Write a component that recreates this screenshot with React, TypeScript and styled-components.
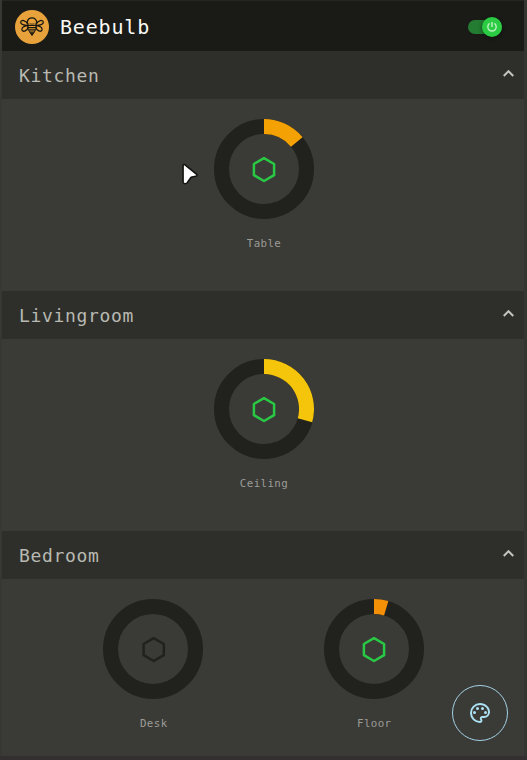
import React from "react";
import styled, { createGlobalStyle } from "styled-components";

const GlobalStyle = createGlobalStyle`
  * { box-sizing: border-box; }
  html, body { margin: 0; background: #332f30; }
  body { font-family: "DejaVu Sans Mono", monospace; overflow: hidden; }
  svg { display: block; flex: none; }
  h1, h2 { margin: 0; font-weight: 400; }
`;

const Page = styled.div`
  position: relative;
  width: 527px;
  height: 756px;
  display: flex;
  flex-direction: column;
  background: #3a3a36;
  border-left: 2px solid #373834;
  border-right: 3px solid #353632;
`;

const AppBar = styled.header`
  height: 51px;
  flex: none;
  display: flex;
  align-items: center;
  padding: 1px 22px 0 13px;
  background: #1a1b17;
  border-top: 1px solid #252622;
`;

const Title = styled.h1`
  flex: 1;
  margin-left: 11px;
  font-size: 20px;
  letter-spacing: 0.82px;
  line-height: 28px;
  color: #fafaf5;
`;

const Switch = styled.div`
  width: 34px;
  height: 14px;
  border-radius: 7px;
  background: #237c31;
  display: flex;
  align-items: center;
  justify-content: flex-end;
`;

const Thumb = styled.div`
  width: 20px;
  height: 20px;
  flex: none;
  border-radius: 50%;
  background: #2bcb43;
  box-shadow: 0 1px 4px rgba(0, 0, 0, 0.45);
  display: grid;
  place-items: center;
`;

const RoomHeader = styled.div`
  height: 48px;
  flex: none;
  display: flex;
  align-items: center;
  justify-content: space-between;
  padding: 0 5px 0 17px;
  background: #2e2f2a;
`;

const RoomName = styled.h2`
  padding-top: 2px;
  font-size: 18px;
  letter-spacing: 0.66px;
  line-height: 24px;
  color: #b8b9b2;
`;

const Lamps = styled.div<{ $height: number }>`
  height: ${(p) => p.$height}px;
  flex: none;
  display: flex;
  padding: 20px 40px 0 41px;
`;

const LampCell = styled.div`
  flex: 1;
  display: flex;
  flex-direction: column;
  align-items: center;
  gap: 16px;
`;

const LampLabel = styled.span`
  padding-left: 1px;
  font-size: 10.8px;
  letter-spacing: 0.4px;
  line-height: 17px;
  color: #9b9c96;
`;

const ColorButton = styled.button`
  position: absolute;
  right: 16px;
  bottom: 15px;
  width: 56px;
  height: 56px;
  padding: 0;
  border: 1px solid #a5d2e6;
  border-radius: 50%;
  background: transparent;
  display: grid;
  place-items: center;
`;

const Pointer = styled.svg`
  position: absolute;
  left: 178px;
  top: 161px;
`;

const BeeLogo = () => (
  <svg width="34" height="34" viewBox="0 0 34 34" fill="none" stroke="#18170f">
    <circle cx="17" cy="17" r="17" fill="#e8a23c" stroke="none" />
    <g strokeWidth="1.3" strokeLinejoin="round">
      <path d="M13.4 14.6C10.8 10 6 9.4 5.7 12.2c-.2 2.3 3.8 3.2 7.4 3.5C8.8 16 6.4 17.6 7 20c.8 2.7 5.5.8 6.3-3.4" />
      <path d="M20.6 14.6C23.2 10 28 9.4 28.3 12.2c.2 2.3-3.8 3.2-7.4 3.5 4.3.3 6.7 1.9 6.1 4.3-.8 2.7-5.5.8-6.3-3.4" />
      <path d="M12.9 14.4c-1-1.4-.6-4 .8-5.3 1.8-1.7 4.8-1.7 6.6 0 1.4 1.3 1.8 3.9.8 5.3" />
      <path d="M14.4 13.2c1.2 1.1 4 1.1 5.2 0" strokeWidth=".6" />
    </g>
    <path d="M13 15.3h8M13 17.6h8M13.5 19.9h7M14.6 22.1h4.8" strokeWidth="1.35" />
    <path d="M13 15c-.7 3 .8 6.4 4 10.2 3.2-3.8 4.7-7.2 4-10.2" strokeWidth="1" />
    <path d="M15.2 23h3.6L17 26.2z" fill="#18170f" stroke="none" />
  </svg>
);

const PowerIcon = () => (
  <svg width="12" height="12" viewBox="0 0 12 12" fill="none" stroke="#b4efb9" strokeWidth="1.5">
    <path d="M6 1v5.1M3.6 2.4a4.2 4.2 0 1 0 4.8 0" />
  </svg>
);

const ChevronUp = () => (
  <svg width="21" height="21" viewBox="0 0 24 24" fill="#c9cac4" stroke="#c9cac4" strokeWidth=".4" transform="translate(0 -2)">
    <path d="M7.41 15.41 12 10.83l4.59 4.58L18 14l-6-6-6 6z" />
  </svg>
);

const PaletteIcon = () => (
  <svg width="24" height="24" viewBox="0 0 24 24" fill="#ace1f4">
    <path d="M12 22A10 10 0 0 1 2 12 10 10 0 0 1 12 2c5.5 0 10 4 10 9a6 6 0 0 1-6 6h-1.8c-.3 0-.5.2-.5.5 0 .1.1.2.1.3.4.5.6 1.1.6 1.7.1 1.4-1 2.5-2.4 2.5m0-18a8 8 0 0 0-8 8 8 8 0 0 0 8 8c.3 0 .5-.2.5-.5 0-.2-.1-.3-.1-.4-.4-.5-.6-1-.6-1.6 0-1.4 1.1-2.5 2.5-2.5H16a4 4 0 0 0 4-4c0-3.9-3.6-7-8-7" />
    <circle cx="6.5" cy="11.5" r="1.5" />
    <circle cx="9.5" cy="7.5" r="1.5" />
    <circle cx="14.5" cy="7.5" r="1.5" />
    <circle cx="17.5" cy="11.5" r="1.5" />
  </svg>
);

interface Lamp {
  name: string;
  angle: number;
  color: string;
}

const slice = (angle: number) => {
  const a = (angle * Math.PI) / 180;
  const at = (r: number) => `${50 + r * Math.sin(a)} ${50 - r * Math.cos(a)}`;
  return `M50 0A50 50 0 0 1 ${at(50)}L${at(35)}A35 35 0 0 0 50 15Z`;
};

const LampDial = ({ angle, color }: Lamp) => (
  <svg width="100" height="100" viewBox="0 0 100 100">
    <circle cx="50" cy="50" r="42.5" fill="none" stroke="#21221d" strokeWidth="15" />
    {angle > 0 && <path d={slice(angle)} fill={color} />}
    <path
      d="M50 39.2 60.1 45v11.2L50 62 39.9 56.2V45Z"
      transform={angle > 0 ? undefined : "translate(.7 0)"}
      fill="none"
      stroke={angle > 0 ? "#2ac945" : "#21221d"}
      strokeWidth="2.5"
      strokeLinejoin="round"
    />
  </svg>
);

const rooms: { name: string; height: number; lamps: Lamp[] }[] = [
  { name: "Kitchen", height: 192, lamps: [{ name: "Table", angle: 50.4, color: "#f4a104" }] },
  { name: "Livingroom", height: 192, lamps: [{ name: "Ceiling", angle: 105.5, color: "#f5c50c" }] },
  {
    name: "Bedroom",
    height: 177,
    lamps: [
      { name: "Desk", angle: 0, color: "#f49008" },
      { name: "Floor", angle: 16.7, color: "#f49008" },
    ],
  },
];

export default function App() {
  return (
    <>
      <GlobalStyle />
      <Page>
        <AppBar>
          <BeeLogo />
          <Title>Beebulb</Title>
          <Switch>
            <Thumb>
              <PowerIcon />
            </Thumb>
          </Switch>
        </AppBar>
        {rooms.map((room) => (
          <section key={room.name}>
            <RoomHeader>
              <RoomName>{room.name}</RoomName>
              <ChevronUp />
            </RoomHeader>
            <Lamps $height={room.height}>
              {room.lamps.map((lamp) => (
                <LampCell key={lamp.name}>
                  <LampDial {...lamp} />
                  <LampLabel>{lamp.name}</LampLabel>
                </LampCell>
              ))}
            </Lamps>
          </section>
        ))}
        <ColorButton aria-label="Choose color">
          <PaletteIcon />
        </ColorButton>
        <Pointer width="24" height="28" viewBox="0 0 24 28">
          <path
            d="M3.1 4.6c0-1.2 1-1.5 1.9-.8l11.4 9.4c1.1.9.6 2-.7 2.1l-3.6.6c-.6.1-1 .3-1.4.8l-3.4 4.9c-.9 1.2-3.8 1.6-4.2-.2Z"
            fill="#fff"
            stroke="#10110e"
            strokeWidth="1.5"
            strokeLinejoin="round"
          />
        </Pointer>
      </Page>
    </>
  );
}
